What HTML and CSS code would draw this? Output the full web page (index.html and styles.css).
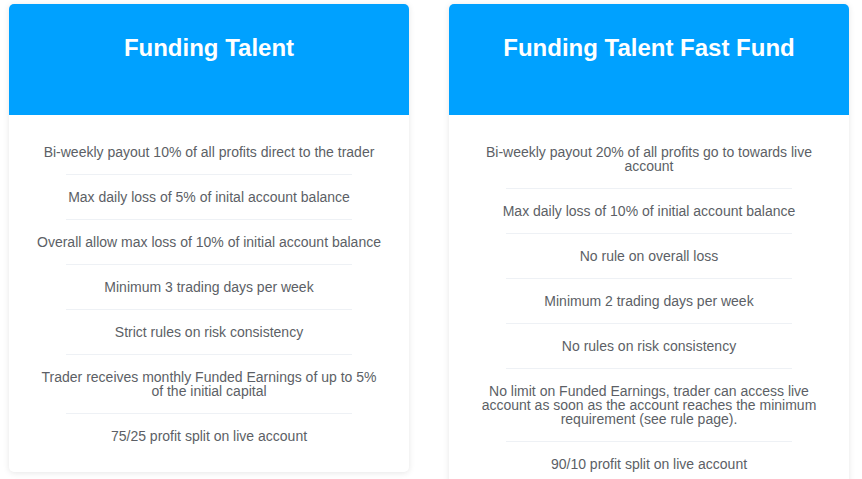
FILE: index.html
```html
<!DOCTYPE html>
<html lang="en">
<head>
    <meta charset="UTF-8">
    <meta name="viewport" content="width=device-width, initial-scale=1.0">
    <title>Funding Plans</title>
    <link rel="stylesheet" href="styles.css">
</head>
<body>

    <div class="plans">
        <div class="plan">
            <div class="plan-header">
                <h2>Funding Talent</h2>
            </div>
            <ul class="plan-rules">
                <li>Bi-weekly payout 10% of all profits direct to the trader</li>
                <li>Max daily loss of 5% of inital account balance</li>
                <li>Overall allow max loss of 10% of initial account balance</li>
                <li>Minimum 3 trading days per week</li>
                <li>Strict rules on risk consistency</li>
                <li>Trader receives monthly Funded Earnings of up to 5% of the initial capital</li>
                <li>75/25 profit split on live account</li>
            </ul>
        </div>

        <div class="plan">
            <div class="plan-header">
                <h2>Funding Talent Fast Fund</h2>
            </div>
            <ul class="plan-rules">
                <li>Bi-weekly payout 20% of all profits go to towards live account</li>
                <li>Max daily loss of 10% of initial account balance</li>
                <li>No rule on overall loss</li>
                <li>Minimum 2 trading days per week</li>
                <li>No rules on risk consistency</li>
                <li>No limit on Funded Earnings, trader can access live account as soon as the account reaches the minimum requirement (see rule page).</li>
                <li>90/10 profit split on live account</li>
            </ul>
        </div>
    </div>

</body>
</html>
```

FILE: styles.css
```css
body {
    font-family: "Liberation Sans", Arial, Helvetica, sans-serif;
    margin: 0;
    padding: 4px 0 0 9px;
    background-color: #fff;
}
.plans {
    display: flex;
    align-items: flex-start;
    gap: 40px;
}
.plan {
    width: 400px;
    flex-shrink: 0;
    background-color: #fff;
    border-radius: 5px;
    box-shadow: 0 1px 6px rgba(0, 0, 0, 0.1);
    overflow: hidden;
}
.plan-header {
    background-color: #00a1ff;
    height: 111px;
    padding-top: 26px;
    box-sizing: border-box;
    text-align: center;
}
.plan-header h2 {
    margin: 0;
    color: #fff;
    font-size: 24px;
    line-height: 36px;
    font-weight: bold;
}
.plan-rules {
    list-style: none;
    margin: 0;
    padding: 15px 25px 14px;
    text-align: center;
    color: #5c5f66;
    font-size: 14px;
    line-height: 14px;
}
.plan-rules li {
    padding-top: 15px;
}
.plan-rules li:last-child {
    padding-bottom: 15px;
}
.plan-rules li:not(:last-child)::after {
    content: "";
    display: block;
    width: 286px;
    height: 1px;
    margin: 15px auto 0;
    background-color: #eef1f5;
}
```
